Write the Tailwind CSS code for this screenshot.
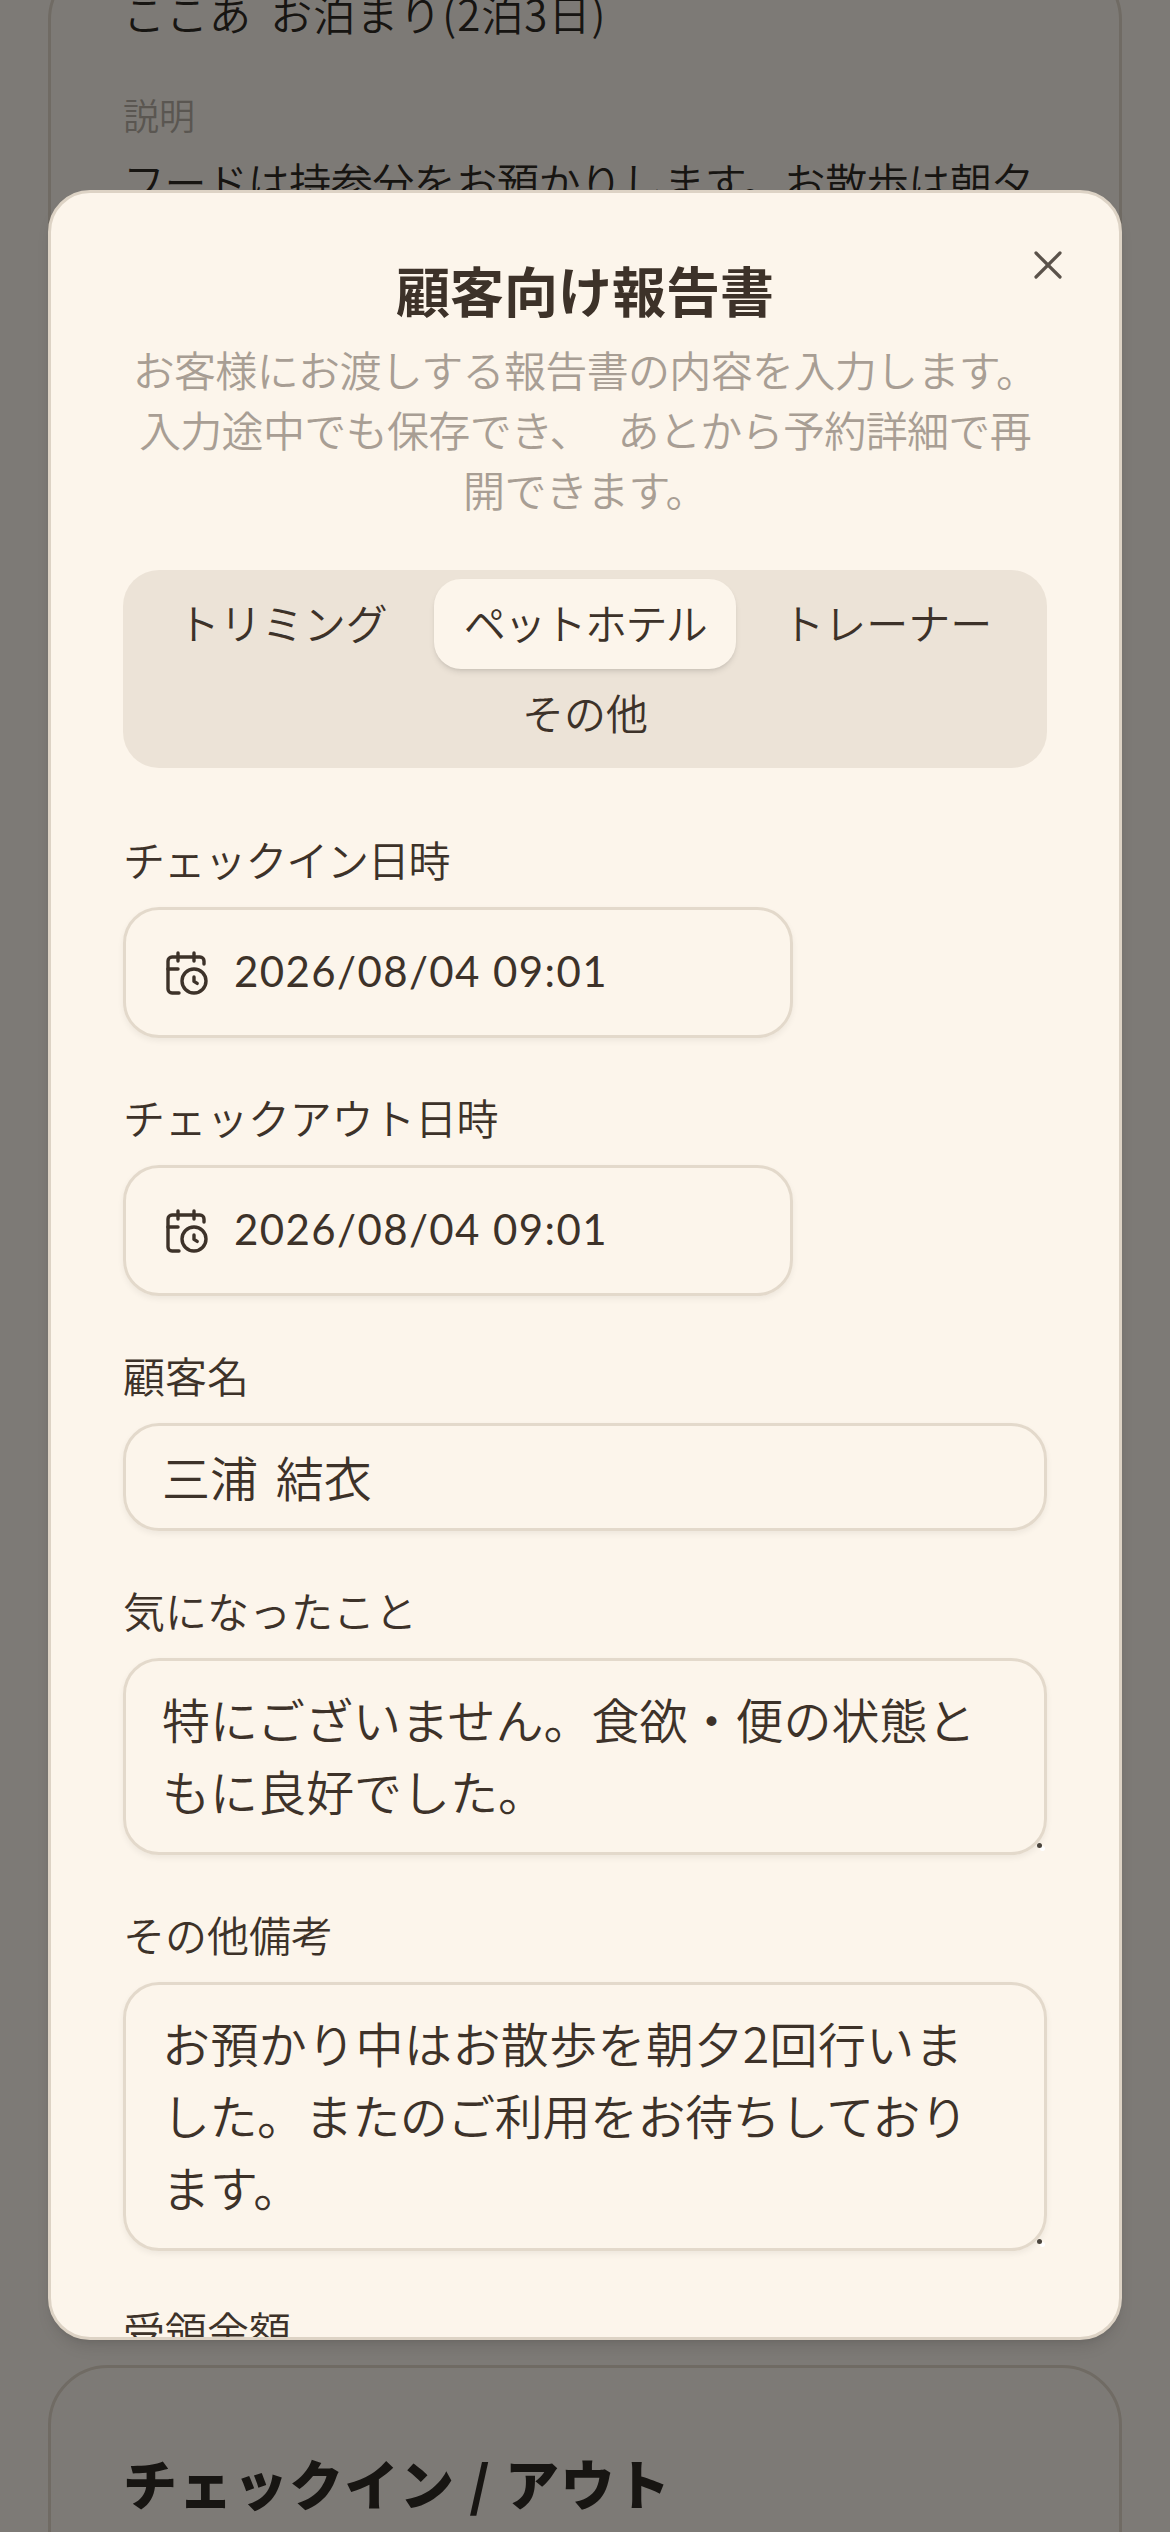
<!DOCTYPE html>
<html lang="ja" class="overflow-hidden">
  <head>
    <meta charset="UTF-8" />
    <meta name="viewport" content="width=device-width, initial-scale=1.0" />
    <title>顧客向け報告書</title>
    <script src="https://cdn.jsdelivr.net/npm/@tailwindcss/browser@4"></script>
  </head>
  <body class="relative h-[2532px] w-[1170px] overflow-hidden bg-[#fbf5ec] font-['Noto_Sans_CJK_JP',sans-serif] font-[350] text-[#3d3229]">
    <!-- page behind the dialog -->
    <main class="flex flex-col gap-[48px] px-[48px]">
      <section class="-mt-[40px] h-[2357px] rounded-[60px] border-[3px] border-[#e0d6c8] px-[72px] pt-[17px] text-[#2f2a25]">
        <p class="text-[42px] leading-[66px] tracking-[1px] [word-spacing:8px]">ここあ お泊まり(2泊3日)</p>
        <p class="mt-[44px] text-[36px] leading-[48px] text-[#b5ada3]">説明</p>
        <p class="mt-[10px] text-[42px] leading-[66px] tracking-[-0.45px]">フードは持参分をお預かりします。お散歩は朝夕</p>
      </section>
      <section class="h-[300px] rounded-[60px] border-[3px] border-[#e0d6c8] px-[72px] pt-[79px]">
        <h2 class="text-[54px] leading-[72px] font-black tracking-[1.4px] text-[#2f2a25]">チェックイン / アウト</h2>
      </section>
    </main>
    <div class="absolute inset-0 bg-black/50"></div>

    <!-- dialog -->
    <div class="absolute top-[190px] left-[48px] h-[2150px] w-[1074px] overflow-hidden rounded-[42px] border-[3px] border-[#ddd3c5] bg-[#fcf5eb] px-[72px] pt-[70px] shadow-lg">
      <button class="absolute top-[48px] right-[47px] text-[#5a524a]">
        <svg class="h-[48px] w-[48px]" viewBox="0 0 24 24" fill="none" stroke="currentColor" stroke-width="1.6" stroke-linecap="round" stroke-linejoin="round">
          <path d="M18 6 6 18" />
          <path d="m6 6 12 12" />
        </svg>
      </button>

      <h1 class="text-center text-[54px] leading-[54px] font-bold">顧客向け報告書</h1>
      <p class="mt-[22px] text-center text-[42px] leading-[60px] tracking-[-0.65px] text-[#a89e94] [word-spacing:18px]">お客様にお渡しする報告書の内容を入力します。入力途中でも保存でき、 あとから予約詳細で再開できます。</p>

      <div class="mt-[51px] flex flex-wrap justify-center gap-x-[16px] rounded-[36px] bg-[#ece3d7] p-[9px]">
        <button class="h-[90px] rounded-[27px] px-[30px] pb-[6px] text-[42px]">トリミング</button>
        <button class="h-[90px] rounded-[27px] bg-[#fcf5eb] px-[30px] pb-[6px] text-[42px] tracking-[-1.6px] shadow-md">ペットホテル</button>
        <button class="h-[90px] rounded-[27px] px-[30px] pb-[6px] text-[42px]">トレーナー</button>
        <button class="h-[90px] rounded-[27px] px-[30px] pb-[6px] text-[42px]">その他</button>
      </div>

      <div class="mt-[61px] flex flex-col gap-[49px]">
        <div>
          <label class="mb-[18px] block text-[42px] leading-[60px] tracking-[-1.2px]">チェックイン日時</label>
          <button class="flex h-[131px] w-[670px] items-center gap-[24px] rounded-[36px] border-[3px] border-[#e3d9cb] px-[36px] shadow-[0_3px_6px_rgba(0,0,0,0.06)]">
            <svg class="h-[48px] w-[48px]" viewBox="0 0 24 24" fill="none" stroke="currentColor" stroke-width="1.7" stroke-linecap="round" stroke-linejoin="round">
              <path d="M16 14v2.2l1.6 1" />
              <path d="M16 2v4" />
              <path d="M21 7.5V6a2 2 0 0 0-2-2H5a2 2 0 0 0-2 2v14a2 2 0 0 0 2 2h3.5" />
              <path d="M3 10h5" />
              <path d="M8 2v4" />
              <circle cx="16" cy="16" r="6" />
            </svg>
            <span class="pb-[2px] font-['Lato',sans-serif] text-[42px] font-normal tracking-[1.4px]">2026/08/04 09:01</span>
          </button>
        </div>
        <div>
          <label class="mb-[18px] block text-[42px] leading-[60px] tracking-[-0.3px]">チェックアウト日時</label>
          <button class="flex h-[131px] w-[670px] items-center gap-[24px] rounded-[36px] border-[3px] border-[#e3d9cb] px-[36px] shadow-[0_3px_6px_rgba(0,0,0,0.06)]">
            <svg class="h-[48px] w-[48px]" viewBox="0 0 24 24" fill="none" stroke="currentColor" stroke-width="1.7" stroke-linecap="round" stroke-linejoin="round">
              <path d="M16 14v2.2l1.6 1" />
              <path d="M16 2v4" />
              <path d="M21 7.5V6a2 2 0 0 0-2-2H5a2 2 0 0 0-2 2v14a2 2 0 0 0 2 2h3.5" />
              <path d="M3 10h5" />
              <path d="M8 2v4" />
              <circle cx="16" cy="16" r="6" />
            </svg>
            <span class="pb-[2px] font-['Lato',sans-serif] text-[42px] font-normal tracking-[1.4px]">2026/08/04 09:01</span>
          </button>
        </div>
        <div>
          <label class="mb-[18px] block text-[42px] leading-[60px]">顧客名</label>
          <div class="flex h-[108px] items-center rounded-[36px] border-[3px] border-[#e3d9cb] px-[36px] pb-[2px] text-[48px] shadow-[0_3px_6px_rgba(0,0,0,0.06)] [word-spacing:7px]">三浦 結衣</div>
        </div>
        <div>
          <label class="mb-[18px] block text-[42px] leading-[60px]">気になったこと</label>
          <div class="relative rounded-[36px] border-[3px] border-[#e3d9cb] px-[36px] pt-[21px] pb-[26px] text-[48px] leading-[72px] shadow-[0_3px_6px_rgba(0,0,0,0.06)]">
            特にございません。食欲・便の状態ともに良好でした。
            <span class="absolute right-[2px] bottom-[4px] h-[5px] w-[5px] rounded-full bg-[#4a443c] shadow-[3px_3px_0_#ffffff]"></span>
          </div>
        </div>
        <div>
          <label class="mb-[18px] block text-[42px] leading-[60px]">その他備考</label>
          <div class="relative rounded-[36px] border-[3px] border-[#e3d9cb] px-[36px] pt-[21px] pb-[26px] text-[48px] leading-[72px] shadow-[0_3px_6px_rgba(0,0,0,0.06)]">
            <span class="tracking-[0.4px]">お預かり中はお散歩を朝夕2回行いま</span><br /><span class="tracking-[-0.45px]">した。またのご利用をお待ちしており</span><br />ます。
            <span class="absolute right-[2px] bottom-[4px] h-[5px] w-[5px] rounded-full bg-[#4a443c] shadow-[3px_3px_0_#ffffff]"></span>
          </div>
        </div>
        <div>
          <label class="block text-[42px] leading-[60px]">受領金額</label>
        </div>
      </div>
    </div>
  </body>
</html>
